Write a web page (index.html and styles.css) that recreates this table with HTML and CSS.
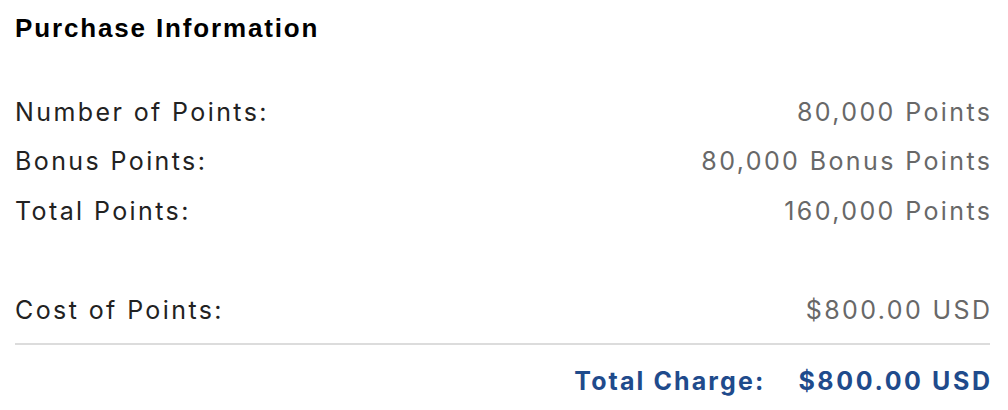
FILE: index.html
```html
<!DOCTYPE html>
<html lang="en">
<head>
<meta charset="utf-8">
<title>Purchase Information</title>
<link rel="stylesheet" href="styles.css">
</head>
<body>
<section class="purchase">
  <h2 class="purchase-title">Purchase Information</h2>
  <div class="lines">
    <div class="line"><span class="label">Number of Points:</span><span class="value">80,000 Points</span></div>
    <div class="line"><span class="label">Bonus Points:</span><span class="value">80,000 Bonus Points</span></div>
    <div class="line"><span class="label">Total Points:</span><span class="value">160,000 Points</span></div>
    <div class="line spacer"></div>
    <div class="line"><span class="label">Cost of Points:</span><span class="value">$800.00 USD</span></div>
  </div>
  <div class="total">
    <span class="total-label">Total Charge:</span>
    <span class="total-value">$800.00 USD</span>
  </div>
</section>
</body>
</html>
```
FILE: styles.css
```css
html, body {
  margin: 0;
  padding: 0;
  background: #ffffff;
}

.purchase {
  padding: 14px 18px 0 15px;
  font-family: "Inter", "Noto Sans", sans-serif;
}

.purchase-title {
  margin: 0;
  font-family: "Liberation Sans", Arial, sans-serif;
  font-weight: bold;
  font-size: 26px;
  letter-spacing: 1.85px;
  line-height: 29px;
  color: #000;
}

.lines {
  margin-top: 44px;
  border-bottom: 2px solid #dcdcdc;
  padding-bottom: 8px;
}

.line {
  display: flex;
  justify-content: space-between;
  align-items: center;
  height: 49.5px;
  font-size: 25px;
  letter-spacing: 2.4px;
}

.label {
  color: #222222;
}

.value {
  color: #686868;
  margin-right: -2.4px;
}

.total {
  display: flex;
  justify-content: flex-end;
  gap: 33px;
  margin-top: 12px;
  font-size: 25px;
  font-weight: 700;
  letter-spacing: 2.6px;
  color: #1f4b8c;
  line-height: 49px;
}

.total-label {
  letter-spacing: 2.1px;
}

.total-value {
  margin-right: -2.6px;
}
```
